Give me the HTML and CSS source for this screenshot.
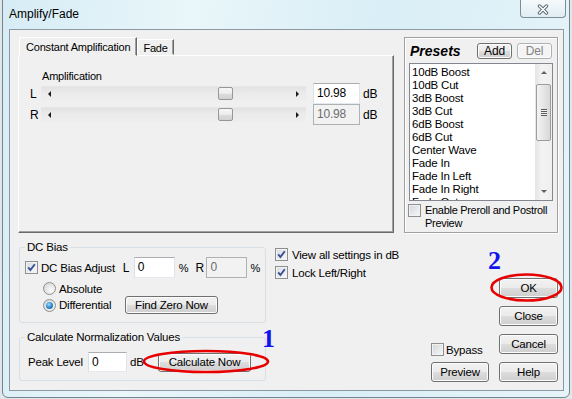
FILE: index.html
```html
<!DOCTYPE html>
<html lang="en">
<head>
    <meta charset="UTF-8">
    <title>Amplify/Fade</title>
    <link rel="stylesheet" href="styles.css">
</head>
<body>
<div class="window">
    <div class="titlebar">
        <span class="title">Amplify/Fade</span>
        <div class="close-btn">
            <svg width="14" height="11" viewBox="0 0 14 11">
                <path d="M3.5 2 L10.5 9 M10.5 2 L3.5 9" stroke="#5d6b76" stroke-width="3.4" stroke-linecap="round"/>
                <path d="M3.5 2 L10.5 9 M10.5 2 L3.5 9" stroke="#fff" stroke-width="1.5" stroke-linecap="round"/>
            </svg>
        </div>
    </div>

    <div class="client">
        <div class="top-row">
            <div class="tabs">
                <div class="tab-strip">
                    <div class="tab active">Constant Amplification</div>
                    <div class="tab">Fade</div>
                </div>
                <div class="tab-panel">
                    <div class="amp-label">Amplification</div>
                    <div class="slider-row">
                        <span class="ch">L</span>
                        <div class="slider">
                            <span class="arr-left"></span>
                            <span class="thumb" style="left: 177px"></span>
                            <span class="arr-right"></span>
                        </div>
                        <div class="field wide">10.98</div>
                        <span class="unit">dB</span>
                    </div>
                    <div class="slider-row">
                        <span class="ch">R</span>
                        <div class="slider">
                            <span class="arr-left"></span>
                            <span class="thumb" style="left: 177px"></span>
                            <span class="arr-right"></span>
                        </div>
                        <div class="field wide off">10.98</div>
                        <span class="unit">dB</span>
                    </div>
                </div>
            </div>

            <div class="presets">
                <div class="presets-head">
                    <span class="presets-title">Presets</span>
                    <div class="btn small">Add</div>
                    <div class="btn small disabled">Del</div>
                </div>
                <div class="listbox">
                    <div class="list-items">
                        <div>10dB Boost</div>
                        <div>10dB Cut</div>
                        <div>3dB Boost</div>
                        <div>3dB Cut</div>
                        <div>6dB Boost</div>
                        <div>6dB Cut</div>
                        <div>Center Wave</div>
                        <div>Fade In</div>
                        <div>Fade In Left</div>
                        <div>Fade In Right</div>
                        <div>Fade Out</div>
                    </div>
                    <div class="vscroll">
                        <div class="sb-arrow"><span class="tri-up"></span></div>
                        <div class="sb-thumb"><span class="grip"></span></div>
                        <div class="sb-space"></div>
                        <div class="sb-arrow"><span class="tri-down"></span></div>
                    </div>
                </div>
                <div class="preroll">
                    <span class="chk"></span>
                    <span class="preroll-text">Enable Preroll and Postroll<br>Preview</span>
                </div>
            </div>
        </div>

        <div class="bottom-row">
            <div class="left-col">
                <fieldset class="group dc-group">
                    <legend>DC Bias</legend>
                    <div class="dc-row">
                        <span class="chk checked"><svg width="11" height="11" viewBox="0 0 11 11"><path d="M2.2 5.4 L4.4 8 L8.8 2.2" stroke="#3a4f8e" stroke-width="1.9" fill="none"/></svg></span>
                        <span class="dc-label">DC Bias Adjust</span>
                        <span class="ch">L</span>
                        <div class="field small-field">0</div>
                        <span class="pct">%</span>
                        <span class="ch">R</span>
                        <div class="field small-field off">0</div>
                        <span class="pct2">%</span>
                    </div>
                    <div class="radio-row">
                        <span class="radio"></span>
                        <span class="radio-label">Absolute</span>
                    </div>
                    <div class="radio-row last">
                        <span class="radio on"></span>
                        <span class="radio-label">Differential</span>
                        <div class="btn zero-btn">Find Zero Now</div>
                    </div>
                </fieldset>

                <fieldset class="group norm-group">
                    <legend>Calculate Normalization Values</legend>
                    <div class="norm-row">
                        <span class="peak-label">Peak Level</span>
                        <div class="field peak-field">0</div>
                        <span class="db-label">dB</span>
                        <div class="btn calc-btn">Calculate Now</div>
                    </div>
                </fieldset>
            </div>

            <div class="mid-col">
                <div class="check-row">
                    <span class="chk checked"><svg width="11" height="11" viewBox="0 0 11 11"><path d="M2.2 5.4 L4.4 8 L8.8 2.2" stroke="#3a4f8e" stroke-width="1.9" fill="none"/></svg></span>
                    <span>View all settings in dB</span>
                </div>
                <div class="check-row">
                    <span class="chk checked"><svg width="11" height="11" viewBox="0 0 11 11"><path d="M2.2 5.4 L4.4 8 L8.8 2.2" stroke="#3a4f8e" stroke-width="1.9" fill="none"/></svg></span>
                    <span>Lock Left/Right</span>
                </div>
            </div>

            <div class="right-area">
                <div class="preview-col">
                    <div class="check-row bypass">
                        <span class="chk"></span>
                        <span>Bypass</span>
                    </div>
                    <div class="btn dlg-btn">Preview</div>
                </div>
                <div class="button-col">
                    <div class="btn dlg-btn">OK</div>
                    <div class="btn dlg-btn">Close</div>
                    <div class="btn dlg-btn">Cancel</div>
                    <div class="btn dlg-btn">Help</div>
                </div>
            </div>
        </div>

        <!-- hand-drawn annotations on top of the dialog -->
        <svg class="marks" width="553" height="360">
            <ellipse cx="516.5" cy="257.5" rx="35" ry="13" fill="none" stroke="#e80000" stroke-width="2.6"/>
            <ellipse cx="196" cy="331.5" rx="62" ry="10.5" fill="none" stroke="#e80000" stroke-width="2.6"/>
        </svg>
        <span class="note note-1">1</span>
        <span class="note note-2">2</span>
    </div>
</div>
</body>
</html>
```

FILE: styles.css
```css
body {
    margin: 0;
    width: 572px;
    height: 399px;
    overflow: hidden;
    background-color: #dfe7eb;
    font-family: "Liberation Sans", Arial, sans-serif;
    font-size: 11px;
    letter-spacing: -0.2px;
    color: #000;
}
.window {
    box-sizing: border-box;
    width: 568px;
    height: 400px;
    margin: -2px 0 0 2px;
    padding: 0 5px 0 6px;
    border: 1px solid #75848e;
    border-radius: 0 0 6px 6px;
    background: linear-gradient(100deg, #d6ecf5 0%, #e9f6fa 30%, #d9eef6 60%, #e6f4f9 100%);
}
.titlebar {
    height: 30px;
    display: flex;
    justify-content: space-between;
    align-items: flex-start;
}
.title {
    margin: 8px 0 0 0;
    font-size: 12px;
    line-height: 14px;
    letter-spacing: 0;
}
.close-btn {
    box-sizing: border-box;
    width: 46px;
    height: 19px;
    margin-right: -2px;
    border: 1px solid #7d8d98;
    border-top: none;
    border-radius: 0 0 4px 4px;
    background: linear-gradient(#f6fafc, #e0edf3);
    display: flex;
    justify-content: center;
    align-items: center;
    padding-top: 2px;
}
.client {
    position: relative;
    box-sizing: border-box;
    height: 362px;
    padding: 7px 0 0 8px;
    border: 1px solid #8a99a3;
    background-color: #f0f0f0;
}
.top-row {
    display: flex;
    gap: 10px;
}
.tabs {
    width: 376px;
}
.tab-strip {
    display: flex;
    align-items: flex-end;
    height: 18px;
    padding-left: 1px;
}
.tab {
    box-sizing: border-box;
    height: 16px;
    padding: 0 5px;
    line-height: 17px;
    border: 1px solid;
    border-color: #fff #696969 transparent #fff;
    box-shadow: inset -1px 0 0 #a0a0a0;
}
.tab.active {
    position: relative;
    z-index: 1;
    height: 19px;
    margin-bottom: -1px;
    padding: 0 6px;
    line-height: 18px;
    background-color: #f0f0f0;
}
.tab-panel {
    box-sizing: border-box;
    height: 178px;
    padding: 14px 0 0 11px;
    border: 1px solid;
    border-color: #fff #696969 #696969 #fff;
    box-shadow: inset -1px -1px 0 #a0a0a0;
}
.amp-label {
    margin-left: 12px;
    line-height: 13px;
}
.slider-row {
    display: flex;
    align-items: center;
    height: 21px;
}
.ch {
    width: 11px;
    flex: none;
    font-size: 12px;
}
.slider {
    position: relative;
    box-sizing: border-box;
    width: 265px;
    height: 15px;
    padding: 0 7px;
    display: flex;
    justify-content: space-between;
    align-items: center;
    background: linear-gradient(#e2e2e2, #ebebeb 45%, #eeeeee);
    border-top: 1px solid #e6e6e6;
}
.arr-left {
    width: 0;
    height: 0;
    border-top: 3px solid transparent;
    border-bottom: 3px solid transparent;
    border-right: 3px solid #1a1a1a;
}
.arr-right {
    width: 0;
    height: 0;
    border-top: 3px solid transparent;
    border-bottom: 3px solid transparent;
    border-left: 3px solid #1a1a1a;
}
.thumb {
    position: absolute;
    top: 0;
    box-sizing: border-box;
    width: 15px;
    height: 13px;
    border: 1px solid #979797;
    border-radius: 2px;
    background: linear-gradient(#f7f7f7, #ececec 50%, #dcdcdc 51%, #d2d2d2);
}
.field {
    box-sizing: border-box;
    flex: none;
    height: 21px;
    padding: 0 3px;
    line-height: 19px;
    font-size: 12px;
    border: 1px solid;
    border-color: #abadb3 #e2e3ea #e3e9ef #dbdfe6;
    background-color: #fff;
}
.field.off {
    background-color: #f2f2f2;
    border-color: #adb2b5;
    color: #6d6d6d;
}
.field.wide {
    width: 47px;
    margin-left: 7px;
}
.unit {
    margin-left: 3px;
    font-size: 12px;
}
.presets {
    box-sizing: border-box;
    width: 154px;
    height: 196px;
    padding: 5px 4px 0 4px;
    border: 1px solid #a0a0a0;
    box-shadow: inset 1px 1px 0 #fff, 1px 1px 0 #fff;
}
.presets-head {
    display: flex;
    align-items: center;
    gap: 5px;
    height: 16px;
    padding-right: 1px;
}
.presets-title {
    flex: 1;
    margin-left: 1px;
    font-size: 14px;
    font-weight: bold;
    font-style: italic;
    letter-spacing: 0;
}
.btn {
    box-sizing: border-box;
    flex: none;
    text-align: center;
    border: 1px solid #707070;
    border-radius: 3px;
    background: linear-gradient(#f2f2f2 0%, #ebebeb 49%, #dddddd 50%, #cfcfcf 100%);
    box-shadow: inset 0 0 0 1px #fcfcfc;
}
.btn.small {
    width: 35px;
    height: 16px;
    line-height: 14px;
    font-size: 12px;
}
.btn.disabled {
    border-color: #adb2b5;
    background: #f4f4f4;
    color: #838383;
}
.listbox {
    box-sizing: border-box;
    display: flex;
    width: 144px;
    height: 138px;
    margin-top: 4px;
    border: 1px solid #828790;
    background-color: #fff;
}
.list-items {
    flex: 1;
    overflow: hidden;
    padding: 2px 0 0 2px;
    line-height: 13px;
    font-size: 11.5px;
}
.vscroll {
    width: 17px;
    display: flex;
    flex-direction: column;
    align-items: center;
    background: linear-gradient(90deg, #e4e4e4, #f3f3f3 40%, #efefef);
}
.sb-arrow {
    height: 17px;
    width: 17px;
    display: flex;
    justify-content: center;
    align-items: center;
}
.tri-up {
    width: 0;
    height: 0;
    border-left: 3px solid transparent;
    border-right: 3px solid transparent;
    border-bottom: 3px solid #606060;
}
.tri-down {
    width: 0;
    height: 0;
    border-left: 3px solid transparent;
    border-right: 3px solid transparent;
    border-top: 3px solid #606060;
}
.sb-thumb {
    box-sizing: border-box;
    width: 15px;
    height: 57px;
    margin-top: 3px;
    border: 1px solid #9d9d9d;
    border-radius: 2px;
    background: linear-gradient(90deg, #f3f3f3, #e6e6e6 50%, #d7d7d7);
    display: flex;
    justify-content: center;
    align-items: center;
}
.grip {
    width: 6px;
    height: 7px;
    background: repeating-linear-gradient(#5a5a5a 0 1px, #f0f0f0 1px 2px);
}
.sb-space {
    flex: 1;
}
.preroll {
    display: flex;
    align-items: flex-start;
    margin: 3px 0 0 -1px;
}
.preroll-text {
    margin-left: 4px;
    line-height: 13px;
    font-size: 11px;
    letter-spacing: -0.3px;
    white-space: nowrap;
}
.chk {
    position: relative;
    box-sizing: border-box;
    flex: none;
    width: 13px;
    height: 13px;
    border: 1px solid #8e8f8f;
    background: linear-gradient(135deg, #d2d5da 0%, #f8f8f8 100%);
    box-shadow: inset 0 0 0 1px #f2f2f2;
}
.chk svg {
    display: block;
}
.chk.checked {
    background: linear-gradient(135deg, #d6dbe4 0%, #f7f8fa 100%);
}
.bottom-row {
    display: flex;
    height: 157px;
    padding-left: 1px;
}
.left-col {
    width: 247px;
    flex: none;
}
.group {
    box-sizing: border-box;
    width: 247px;
    margin: 8px 0 0 0;
    padding: 3px 5px 8px 5px;
    border: 1px solid #d5dfe5;
    border-radius: 3px;
    min-inline-size: 0;
}
.group legend {
    padding: 0 2px;
    line-height: 13px;
    font-size: 11.5px;
}
.dc-row {
    display: flex;
    align-items: center;
    height: 21px;
}
.dc-label {
    width: 83px;
    margin-left: 3px;
    font-size: 11.5px;
}
.field.small-field {
    width: 41px;
}
.pct {
    width: 17px;
    margin-left: 4px;
}
.pct2 {
    margin-left: 3px;
}
.radio-row {
    display: flex;
    align-items: center;
    height: 13px;
    margin: 4px 0 0 18px;
    font-size: 11.5px;
}
.radio-row.last {
    height: 18px;
    margin-top: 1px;
}
.radio {
    position: relative;
    box-sizing: border-box;
    flex: none;
    width: 13px;
    height: 13px;
    border: 1px solid #8e8f8f;
    border-radius: 50%;
    background: radial-gradient(circle at 65% 65%, #fbfbfb, #d8d8d8 80%);
}
.radio.on::after {
    content: "";
    position: absolute;
    top: 2px;
    left: 2px;
    width: 7px;
    height: 7px;
    border-radius: 50%;
    background: radial-gradient(circle at 40% 35%, #9adaff, #2b84c8 55%, #174d80);
}
.radio-label {
    width: 66px;
    margin-left: 3px;
}
.btn.zero-btn {
    width: 93px;
    height: 18px;
    line-height: 16px;
}
.norm-row {
    display: flex;
    align-items: center;
    height: 20px;
    padding-top: 5px;
    font-size: 11.5px;
}
.peak-label {
    width: 60px;
    margin-left: 3px;
}
.field.peak-field {
    width: 39px;
    height: 20px;
    line-height: 18px;
}
.db-label {
    width: 28px;
    margin-left: 3px;
}
.btn.calc-btn {
    width: 93px;
    height: 19px;
    line-height: 17px;
}
.mid-col {
    margin-left: 9px;
    padding-top: 15px;
    display: flex;
    flex-direction: column;
    gap: 5px;
}
.check-row {
    display: flex;
    align-items: center;
    gap: 4px;
    height: 13px;
    font-size: 11.5px;
}
.right-area {
    margin-left: auto;
    display: flex;
    align-items: flex-end;
    gap: 10px;
    padding: 0 5px 8px 0;
}
.preview-col {
    display: flex;
    flex-direction: column;
}
.bypass {
    gap: 2px;
    margin-bottom: 6px;
}
.button-col {
    display: flex;
    flex-direction: column;
    gap: 8px;
}
.btn.dlg-btn {
    width: 58px;
    height: 20px;
    line-height: 18px;
    font-size: 11.5px;
}
.button-col .btn.dlg-btn {
    width: 59px;
}
.marks {
    position: absolute;
    top: 0;
    left: 0;
    pointer-events: none;
}
.note {
    position: absolute;
    font-family: "Liberation Serif", "Times New Roman", serif;
    font-weight: bold;
    font-size: 26px;
    line-height: 26px;
    letter-spacing: 0;
    color: #1212ee;
}
.note-1 {
    left: 252px;
    top: 296px;
}
.note-2 {
    left: 478px;
    top: 218px;
}
```
